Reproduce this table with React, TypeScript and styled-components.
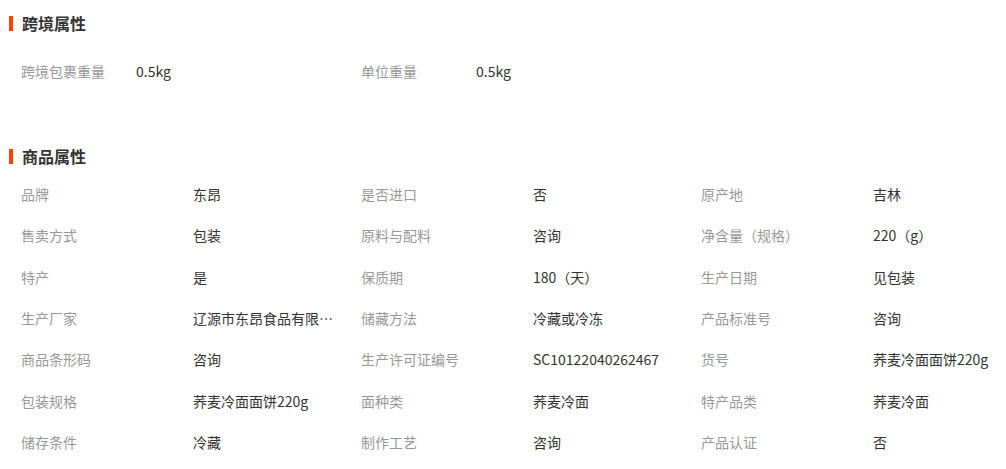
import React from "react";
import styled, { createGlobalStyle } from "styled-components";

const GlobalStyle = createGlobalStyle`
  html, body {
    margin: 0;
    padding: 0;
    background: #fff;
    overflow: hidden;
  }
  body {
    font-family: "Noto Sans CJK SC", "Noto Sans", sans-serif;
    font-size: 14px;
    color: #333;
  }
`;

const Page = styled.div`
  width: 1006px;
  padding-left: 9px;
  box-sizing: border-box;
`;

const SectionTitle = styled.h3<{ $top: number }>`
  display: flex;
  align-items: center;
  height: 30px;
  margin: ${(p) => p.$top}px 0 0;
  font-size: 16px;
  font-weight: bold;
  line-height: 30px;
  color: #333;

  &::before {
    content: "";
    display: block;
    width: 4px;
    height: 15px;
    margin-right: 9px;
    background: #ff4400;
  }
`;

const CrossGrid = styled.div`
  display: grid;
  grid-template-columns: 115px 225px 115px 1fr;
  margin: 13px 0 0 12px;
`;

const AttrGrid = styled.div`
  display: grid;
  grid-template-columns: 172px 168px 172px 168px 172px 1fr;
  grid-auto-rows: 41.33px;
  margin: 3px 0 0 12px;
`;

const Label = styled.div<{ $h?: number }>`
  height: ${(p) => p.$h ?? 41.33}px;
  line-height: ${(p) => p.$h ?? 41.33}px;
  color: #999;
  white-space: nowrap;
  overflow: hidden;
`;

const Value = styled.div<{ $h?: number; $last?: boolean }>`
  height: ${(p) => p.$h ?? 41.33}px;
  line-height: ${(p) => p.$h ?? 41.33}px;
  color: #333;
  white-space: nowrap;
  overflow: hidden;
  text-overflow: ${(p) => (p.$last ? "clip" : "ellipsis")};
  padding-right: ${(p) => (p.$last ? 0 : 26)}px;
`;

const crossAttrs: [string, string][] = [
  ["跨境包裹重量", "0.5kg"],
  ["单位重量", "0.5kg"],
];

const attrs: [string, string][] = [
  ["品牌", "东昂"],
  ["是否进口", "否"],
  ["原产地", "吉林"],
  ["售卖方式", "包装"],
  ["原料与配料", "咨询"],
  ["净含量（规格）", "220（g）"],
  ["特产", "是"],
  ["保质期", "180（天）"],
  ["生产日期", "见包装"],
  ["生产厂家", "辽源市东昂食品有限公司"],
  ["储藏方法", "冷藏或冷冻"],
  ["产品标准号", "咨询"],
  ["商品条形码", "咨询"],
  ["生产许可证编号", "SC10122040262467"],
  ["货号", "荞麦冷面面饼220g"],
  ["包装规格", "荞麦冷面面饼220g"],
  ["面种类", "荞麦冷面"],
  ["特产品类", "荞麦冷面"],
  ["储存条件", "冷藏"],
  ["制作工艺", "咨询"],
  ["产品认证", "否"],
];

const App: React.FC = () => {
  return (
    <Page>
      <GlobalStyle />
      <SectionTitle $top={8}>跨境属性</SectionTitle>
      <CrossGrid>
        {crossAttrs.map(([k, v]) => (
          <React.Fragment key={k}>
            <Label $h={41}>{k}</Label>
            <Value $h={41}>{v}</Value>
          </React.Fragment>
        ))}
      </CrossGrid>

      <SectionTitle $top={49}>商品属性</SectionTitle>
      <AttrGrid>
        {attrs.map(([k, v], i) => (
          <React.Fragment key={k}>
            <Label>{k}</Label>
            <Value $last={i % 3 === 2}>{v}</Value>
          </React.Fragment>
        ))}
      </AttrGrid>
    </Page>
  );
};

export default App;
